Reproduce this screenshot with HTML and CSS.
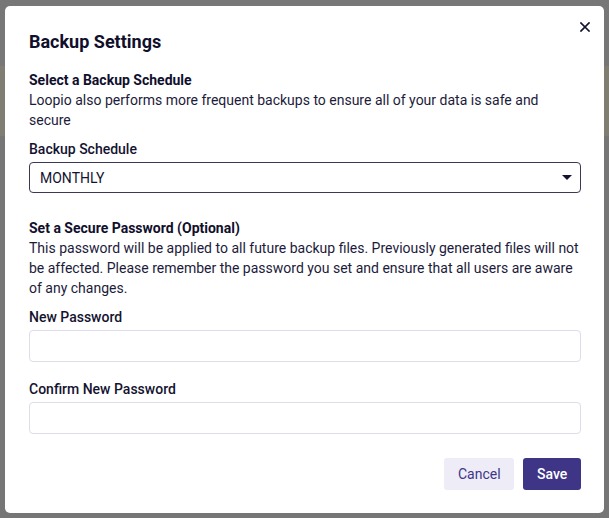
FILE: index.html
```html
<!DOCTYPE html>
<html lang="en">
<head>
<meta charset="utf-8">
<title>Backup Settings</title>
<link rel="stylesheet" href="styles.css">
</head>
<body>
<div class="backdrop">
  <div class="modal" role="dialog" aria-labelledby="modal-title">
    <button class="close" type="button" aria-label="Close">
      <svg width="10" height="10" viewBox="0 0 10 10" aria-hidden="true">
        <path d="M1 1 L9 9 M9 1 L1 9" stroke="#14132f" stroke-width="1.7" stroke-linecap="square"/>
      </svg>
    </button>
    <h1 class="title" id="modal-title">Backup Settings</h1>

    <section class="section">
      <h2 class="section-title">Select a Backup Schedule</h2>
      <p class="section-text">Loopio also performs more frequent backups to ensure all of your data is safe and secure</p>
    </section>

    <label class="field-label label-schedule">Backup Schedule</label>
    <div class="select">
      <span class="select-value">MONTHLY</span>
      <svg class="caret" width="10" height="5" viewBox="0 0 10 5" aria-hidden="true">
        <path d="M0 0 H10 L5 5 Z" fill="#14132f"/>
      </svg>
    </div>

    <section class="section section-password">
      <h2 class="section-title">Set a Secure Password (Optional)</h2>
      <p class="section-text">This password will be applied to all future backup files. Previously generated files will not be affected. Please remember the password you set and ensure that all users are aware of any changes.</p>
    </section>

    <label class="field-label label-new">New Password</label>
    <input class="input" type="password">

    <label class="field-label label-confirm">Confirm New Password</label>
    <input class="input" type="password">

    <div class="actions">
      <button class="btn btn-secondary" type="button">Cancel</button>
      <button class="btn btn-primary" type="button">Save</button>
    </div>
  </div>
</div>
</body>
</html>
```

FILE: styles.css
```css
* { box-sizing: border-box; }

html, body {
  margin: 0;
  padding: 0;
}

body {
  font-family: Roboto, "Liberation Sans", Arial, sans-serif;
  color: #18173a;
  background: #767676;
}

.backdrop {
  width: 609px;
  height: 518px;
  padding: 6px 5px 0 5px;
  background:
    linear-gradient(to bottom,
      #777777 0, #777777 66px,
      #807d73 66px, #807d73 136px,
      #767676 136px);
}

.modal {
  position: relative;
  width: 599px;
  height: 507px;
  background: #ffffff;
  border-radius: 5px;
  padding: 24px 23px 0 24px;
  display: flex;
  flex-direction: column;
}

.close {
  position: absolute;
  top: 11px;
  right: 9px;
  width: 20px;
  height: 20px;
  padding: 0;
  border: 0;
  background: transparent;
  display: flex;
  align-items: center;
  justify-content: center;
  cursor: pointer;
}

.title {
  margin: 0;
  font-size: 18px;
  line-height: 24px;
  font-weight: 700;
  color: #100f2c;
}

.section {
  margin-top: 16px;
}

.section-title {
  margin: 0;
  font-size: 14px;
  line-height: 20px;
  font-weight: 700;
  color: #100f2c;
}

.section-text {
  margin: 0;
  font-size: 14px;
  line-height: 20px;
  font-weight: 400;
  color: #1c1b3b;
}

.field-label {
  display: block;
  font-size: 14px;
  line-height: 20px;
  font-weight: 500;
  color: #14132f;
  margin-bottom: 4px;
}

.label-schedule { margin-top: 9px; margin-bottom: 3px; }

.select {
  height: 31px;
  border: 1px solid #3b3858;
  border-radius: 4px;
  display: flex;
  align-items: center;
  justify-content: space-between;
  padding: 0 8px 0 10px;
}

.select-value {
  font-size: 14px;
  line-height: 20px;
  color: #14132f;
}

.section-password {
  margin-top: 25px;
}

.label-new { margin-top: 9px; margin-bottom: 3px; }
.label-confirm { margin-top: 17px; margin-bottom: 3px; }

.input {
  display: block;
  width: 100%;
  height: 32px;
  border: 1px solid #dedce9;
  border-radius: 4px;
  background: #ffffff;
  padding: 0 10px;
  font: inherit;
  outline: none;
}

.actions {
  margin-top: 24px;
  display: flex;
  justify-content: flex-end;
  gap: 9px;
}

.btn {
  height: 32px;
  border: 0;
  border-radius: 3px;
  font-family: Roboto, "Liberation Sans", Arial, sans-serif;
  font-size: 14px;
  font-weight: 500;
  padding: 0 14px;
  cursor: pointer;
}

.btn-secondary {
  width: 70px;
  background: #eeecf7;
  color: #3e3587;
  font-weight: 400;
}

.btn-primary {
  width: 58px;
  background: #3e3587;
  color: #ffffff;
}
```
